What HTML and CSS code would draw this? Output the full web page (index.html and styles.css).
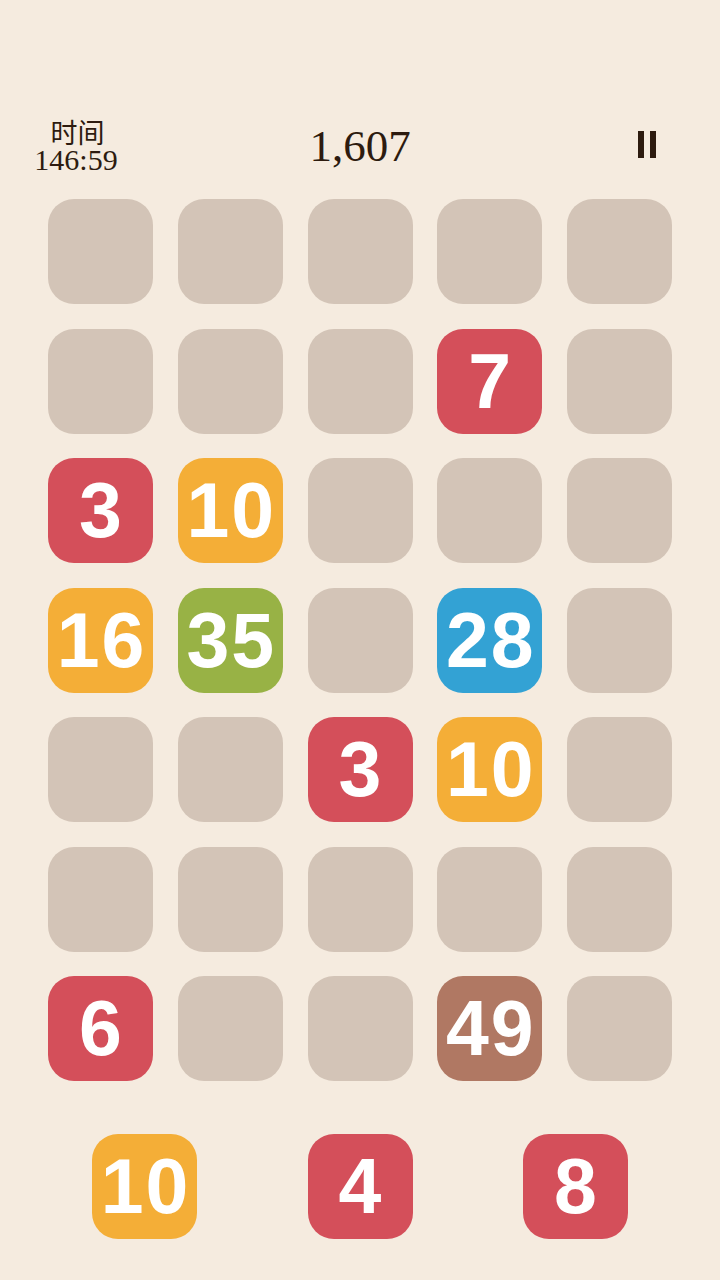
FILE: index.html
```html
<!DOCTYPE html>
<html>
<head>
<meta charset="utf-8">
<link rel="stylesheet" href="styles.css">
</head>
<body>
<div class="screen">
  <div class="header">
    <div class="timer">
      <div class="timer-label">时间</div>
      <div class="timer-value">146:59</div>
    </div>
    <div class="score">1,607</div>
    <div class="pause"><span class="bar"></span><span class="bar"></span></div>
  </div>
  <div class="board">
    <div class="cell"></div><div class="cell"></div><div class="cell"></div><div class="cell"></div><div class="cell"></div>
    <div class="cell"></div><div class="cell"></div><div class="cell"></div><div class="cell red">7</div><div class="cell"></div>
    <div class="cell red">3</div><div class="cell orange">10</div><div class="cell"></div><div class="cell"></div><div class="cell"></div>
    <div class="cell orange">16</div><div class="cell green">35</div><div class="cell"></div><div class="cell blue">28</div><div class="cell"></div>
    <div class="cell"></div><div class="cell"></div><div class="cell red">3</div><div class="cell orange">10</div><div class="cell"></div>
    <div class="cell"></div><div class="cell"></div><div class="cell"></div><div class="cell"></div><div class="cell"></div>
    <div class="cell red">6</div><div class="cell"></div><div class="cell"></div><div class="cell brown">49</div><div class="cell"></div>
  </div>
  <div class="tray">
    <div class="cell orange">10</div>
    <div class="cell red">4</div>
    <div class="cell red">8</div>
  </div>
</div>
</body>
</html>
```
FILE: styles.css
```css
html, body {
  margin: 0;
  padding: 0;
  background: #f5ebdf;
}
.screen {
  width: 720px;
  height: 1280px;
  background: #f5ebdf;
  overflow: hidden;
}
.header {
  height: 199px;
  box-sizing: border-box;
  padding-top: 118px;
  display: grid;
  grid-template-columns: 155px 1fr 155px;
  align-items: start;
  color: #2d1b0f;
}
.timer {
  text-align: center;
}
.timer-label {
  font-family: "Noto Sans CJK SC", sans-serif;
  font-size: 27px;
  line-height: 28px;
}
.timer-value {
  font-family: "Liberation Serif", serif;
  font-size: 30px;
  line-height: 28px;
  margin-left: -3px;
}
.score {
  text-align: center;
  font-family: "Liberation Serif", serif;
  font-size: 45px;
  line-height: 56px;
}
.pause {
  justify-self: end;
  margin-right: 64px;
  margin-top: 13px;
  display: flex;
  gap: 6px;
}
.pause .bar {
  width: 6px;
  height: 27px;
  background: #2d1b0f;
}
.board {
  margin: 0 48px;
  display: grid;
  grid-template-columns: repeat(5, 105px);
  grid-auto-rows: 105px;
  column-gap: 24.75px;
  row-gap: 24.5px;
}
.cell {
  width: 105px;
  height: 105px;
  border-radius: 26px;
  background: #d3c4b7;
  display: flex;
  align-items: center;
  justify-content: center;
  color: #ffffff;
  font-family: "Liberation Sans", Arial, sans-serif;
  font-weight: bold;
  font-size: 77px;
  letter-spacing: 2px;
  text-indent: 2px;
}
.red { background: #d44f5a; }
.orange { background: #f4ae37; }
.green { background: #98b245; }
.blue { background: #33a2d4; }
.brown { background: #b07863; }
.tray {
  margin-top: 53px;
  display: flex;
  justify-content: center;
  gap: 110.5px;
}
```
